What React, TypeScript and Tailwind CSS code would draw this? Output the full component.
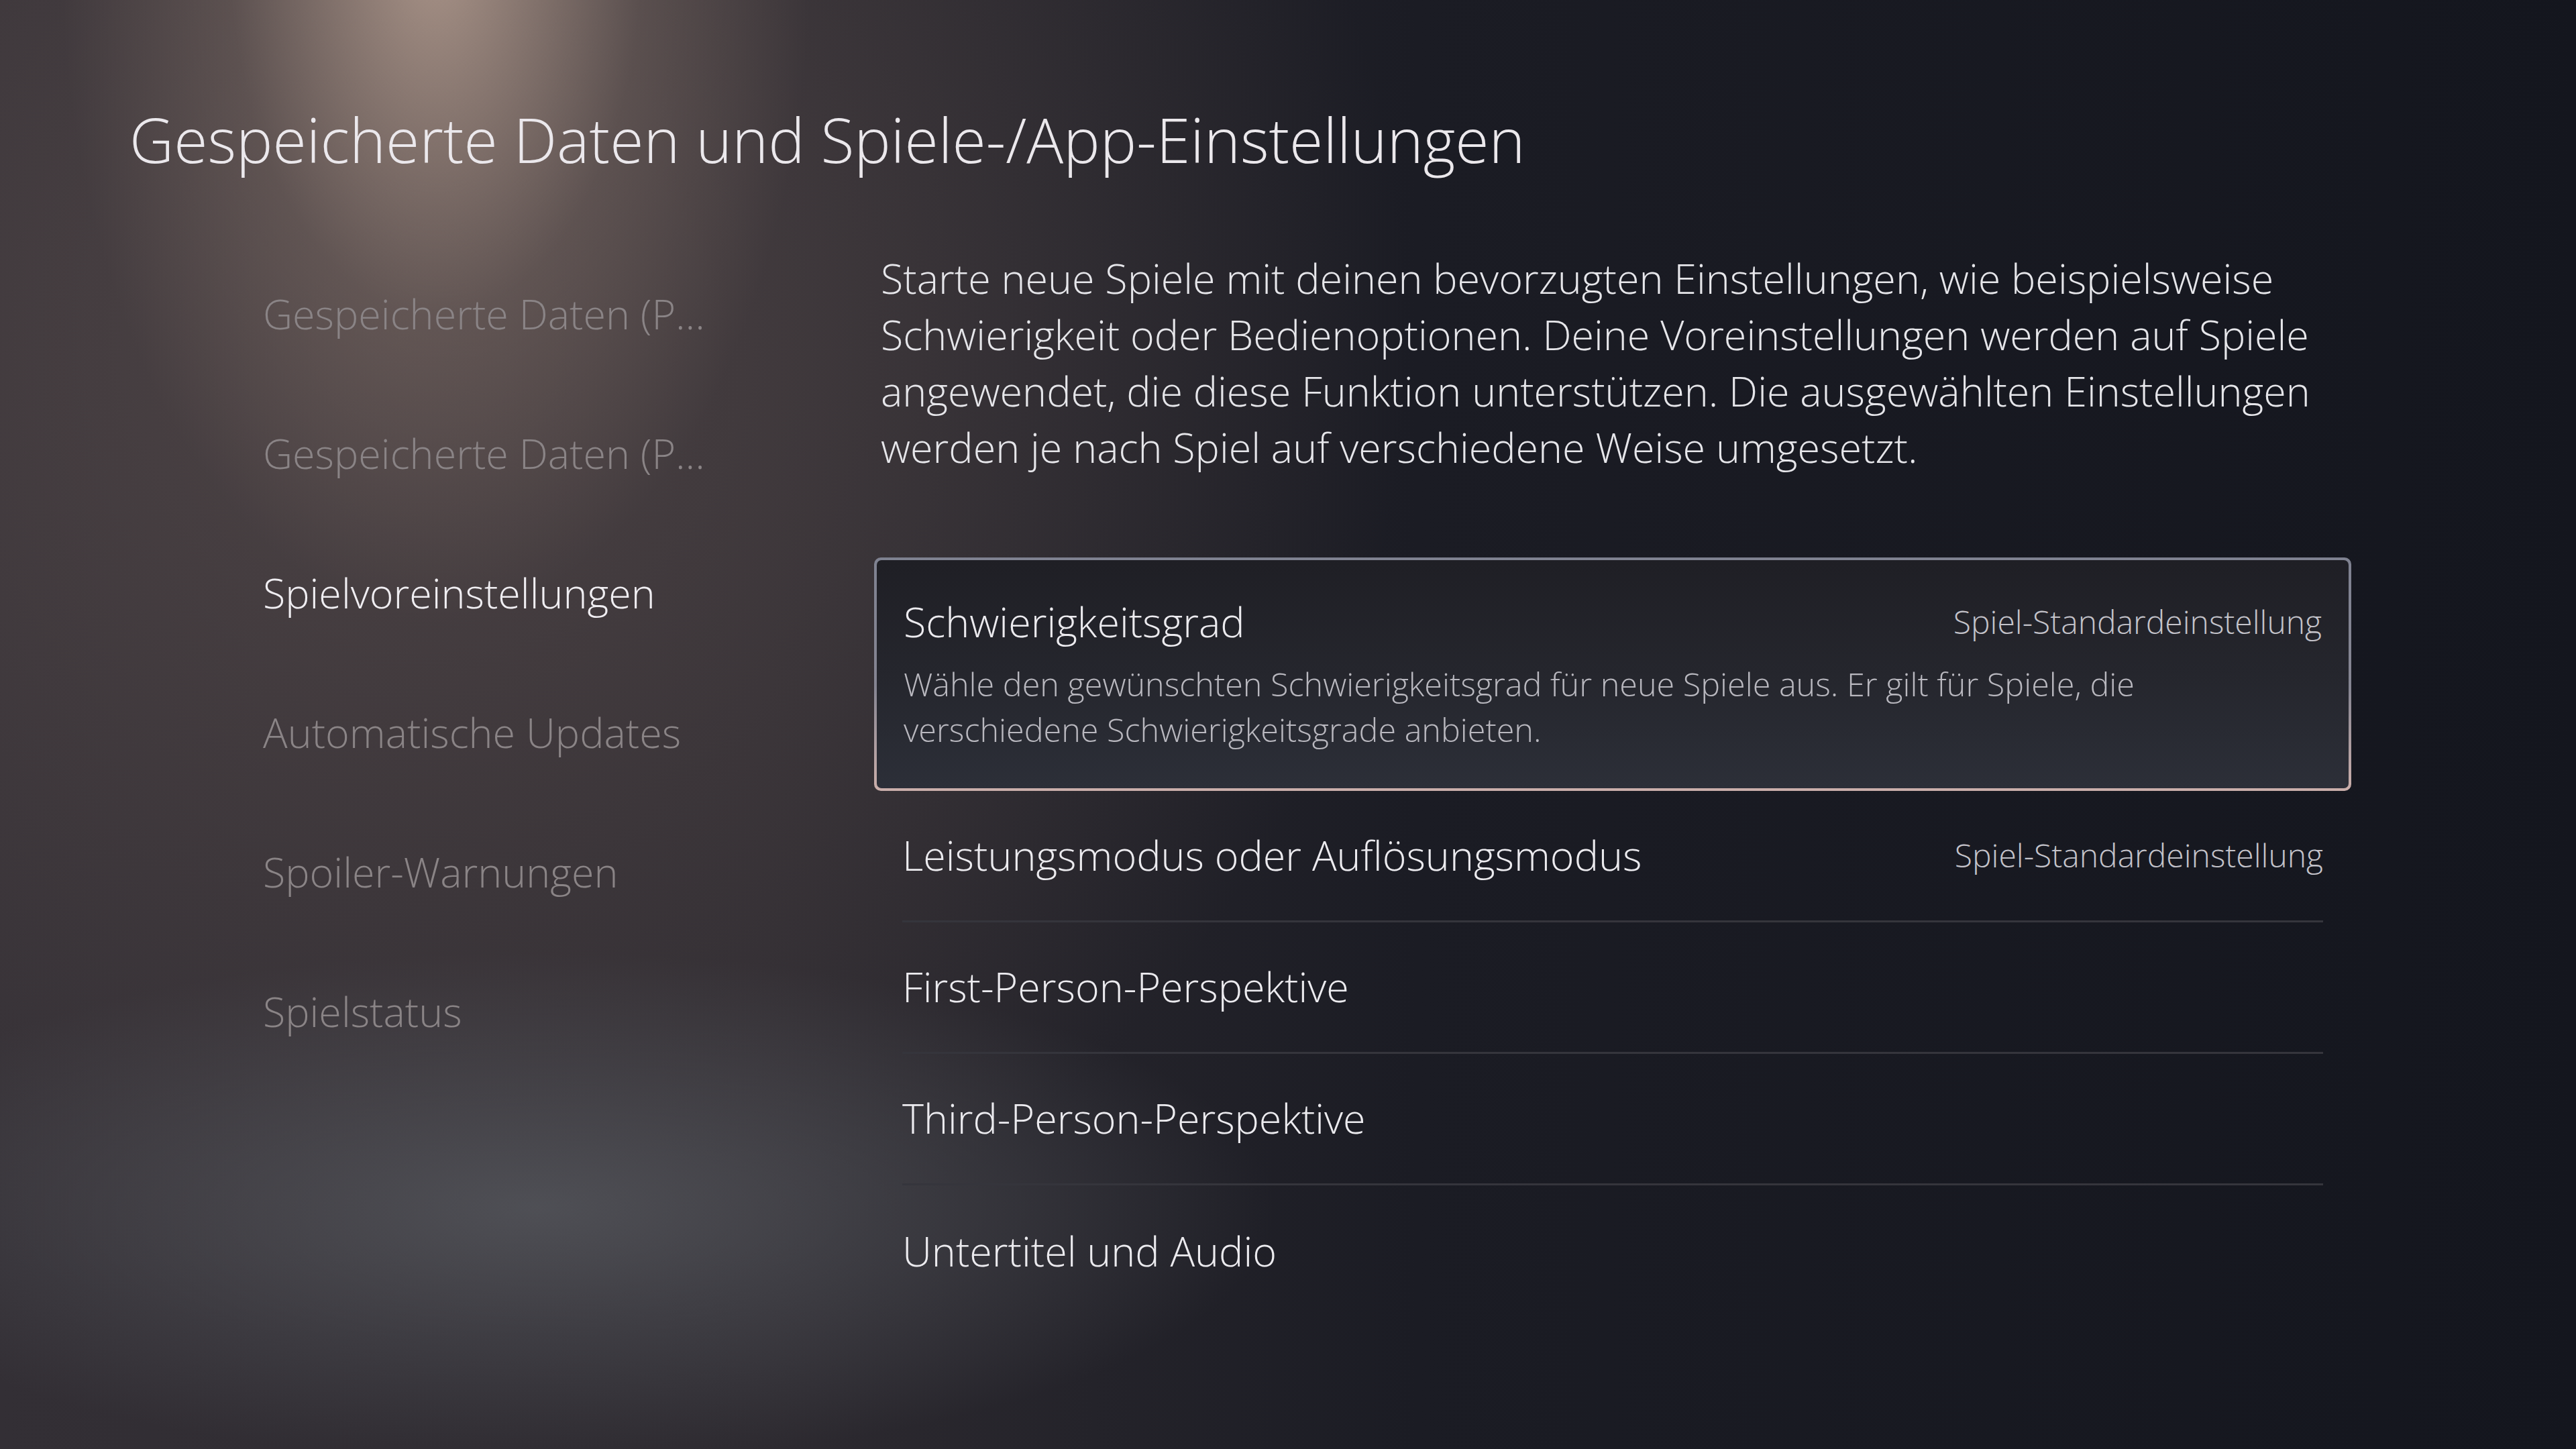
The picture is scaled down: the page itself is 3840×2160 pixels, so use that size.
const navItems = [
  { label: 'Gespeicherte Daten (P...', active: false },
  { label: 'Gespeicherte Daten (P...', active: false },
  { label: 'Spielvoreinstellungen', active: true },
  { label: 'Automatische Updates', active: false },
  { label: 'Spoiler-Warnungen', active: false },
  { label: 'Spielstatus', active: false },
]

const rows = [
  { label: 'Leistungsmodus oder Auflösungsmodus', value: 'Spiel-Standardeinstellung' },
  { label: 'First-Person-Perspektive' },
  { label: 'Third-Person-Perspektive' },
  { label: 'Untertitel und Audio' },
]

export default function App() {
  return (
    <div
      className="w-[3840px] h-[2160px] overflow-hidden text-[#e6e5ea] font-light bg-[#161821]
        bg-[radial-gradient(ellipse_560px_1000px_at_650px_-80px,rgba(195,170,155,0.8),rgba(150,130,120,0.3)_55%,transparent_100%),radial-gradient(ellipse_1100px_380px_at_800px_1800px,rgba(88,90,96,0.75),transparent_100%),radial-gradient(ellipse_1500px_1500px_at_600px_500px,rgba(100,86,84,0.55),transparent_100%),linear-gradient(to_right,#332f35_0%,#2d2a30_30%,#1b1c24_55%,#14161e_100%)]"
      style={{ fontFamily: '"Open Sans", "Noto Sans", sans-serif' }}
    >
      <h1 className="pl-[193px] pt-[162px] text-[91.5px] leading-none font-light text-[#ebe8ec]">
        Gespeicherte Daten und Spiele-/App-Einstellungen
      </h1>

      <div className="flex mt-[102px]">
        {/* left nav */}
        <nav className="w-[1303px] pl-[392px] pt-[8px] flex flex-col">
          {navItems.map((n, i) => (
            <div key={i} className="h-[208px] flex items-center">
              <span className={`text-[61px] ${n.active ? 'text-[#f0eef2]' : 'text-[#8a8486]'}`}>
                {n.label}
              </span>
            </div>
          ))}
        </nav>

        {/* right column */}
        <div className="w-[2202px] flex flex-col">
          <p className="mt-[17px] pl-[10px] pr-[20px] text-[61px] leading-[84px] text-[#e6e6ea]">
            Starte neue Spiele mit deinen bevorzugten Einstellungen, wie beispielsweise Schwierigkeit oder Bedienoptionen. Deine Voreinstellungen werden auf Spiele angewendet, die diese Funktion unterstützen. Die ausgewählten Einstellungen werden je nach Spiel auf verschiedene Weise umgesetzt.
          </p>

          <div className="mt-[122px] rounded-[10px] p-[4px] bg-[linear-gradient(to_bottom,#7f8291_0%,#858592_55%,#cbafab_100%)]">
            <div className="h-[340px] rounded-[7px] px-[40px] pt-[48px] bg-[linear-gradient(to_bottom,#1f1f25_0%,#25262d_50%,#2c2f38_100%)]">
              <div className="flex items-center justify-between">
                <span className="text-[61px] leading-[88px] text-[#ecebef]">Schwierigkeitsgrad</span>
                <span className="text-[48px] text-[#c4c3ca]">Spiel-Standardeinstellung</span>
              </div>
              <p className="mt-[14px] text-[48.5px] leading-[68px] text-[#b9b8bf] pr-[200px]">
                Wähle den gewünschten Schwierigkeitsgrad für neue Spiele aus. Er gilt für Spiele, die verschiedene Schwierigkeitsgrade anbieten.
              </p>
            </div>
          </div>

          <div className="px-[42px] flex flex-col">
            {rows.map((r, i) => (
              <div
                key={r.label}
                className={`h-[196px] flex items-center justify-between ${i < rows.length - 1 ? 'border-b-[3px] border-[#35353c]' : ''}`}
              >
                <span className="text-[61px] text-[#ecebef]">{r.label}</span>
                {r.value && <span className="text-[48px] text-[#c4c3ca]">{r.value}</span>}
              </div>
            ))}
          </div>
        </div>
      </div>
    </div>
  )
}
